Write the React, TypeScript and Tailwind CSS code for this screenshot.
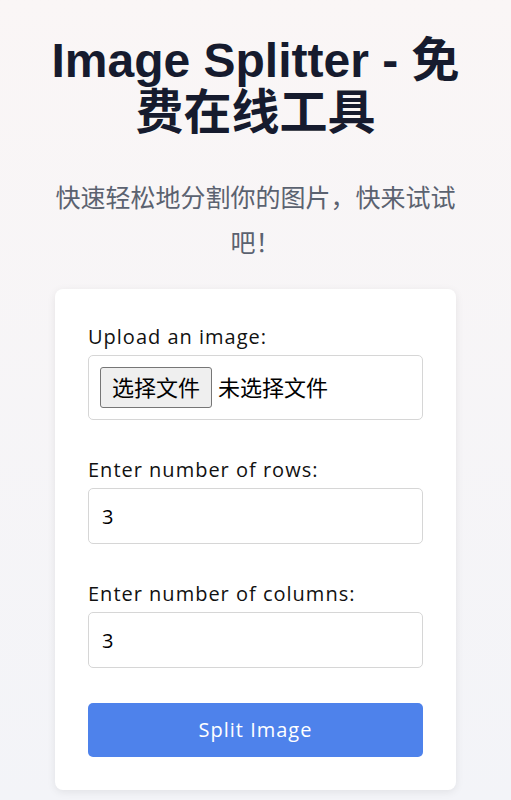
export default function App() {
  const body = {
    fontFamily: '"Open Sans", "Noto Sans CJK SC", sans-serif',
  };
  const title = {
    fontFamily: '"Liberation Sans", "Noto Sans CJK SC", sans-serif',
  };

  return (
    <div
      className="min-h-[800px] bg-gradient-to-b from-[#faf6f6] to-[#f3f4f8] text-[#111827]"
      style={body}
    >
      <div className="mx-auto w-[401px] pt-[35px] pb-[12px]">
        <h1
          className="-mx-[20px] text-center text-[48px] font-bold leading-[52px] text-[#161b2e]"
          style={title}
        >
          Image Splitter - 免费在线工具
        </h1>
        <p className="mt-[36px] text-center text-[25px] leading-[45px] text-[#5b6270]">
          快速轻松地分割你的图片，快来试试吧！
        </p>

        <div className="mt-[24px] rounded-lg bg-white px-[33px] pt-[34px] pb-[33px] shadow-[0_2px_8px_rgba(0,0,0,0.08)]">
          <label className="block text-[20px] leading-[28px] tracking-[1px] text-[#111]">
            Upload an image:
          </label>
          <div className="mt-[4px] flex h-[65px] items-center gap-[6px] rounded-[5px] border border-[#d6d6d6] px-[11px]">
            <span className="flex h-[41px] items-center rounded-[3px] border border-[#767676] bg-[#efefef] px-[11px] text-[22px] text-black">
              选择文件
            </span>
            <span className="text-[22px] text-black">未选择文件</span>
          </div>

          <label className="mt-[36px] block text-[20px] leading-[28px] tracking-[1px] text-[#111]">
            Enter number of rows:
          </label>
          <input
            type="text"
            defaultValue="3"
            className="mt-[4px] block h-[56px] w-full rounded-[5px] border border-[#d6d6d6] px-[13px] text-[20px] text-black outline-none"
          />

          <label className="mt-[36px] block text-[20px] leading-[28px] tracking-[1px] text-[#111]">
            Enter number of columns:
          </label>
          <input
            type="text"
            defaultValue="3"
            className="mt-[4px] block h-[56px] w-full rounded-[5px] border border-[#d6d6d6] px-[13px] text-[20px] text-black outline-none"
          />

          <button
            type="button"
            className="mt-[35px] block h-[54px] w-full rounded-[5px] bg-[#4e82eb] text-[20px] tracking-[1px] text-white"
          >
            Split Image
          </button>
        </div>
      </div>
    </div>
  );
}
